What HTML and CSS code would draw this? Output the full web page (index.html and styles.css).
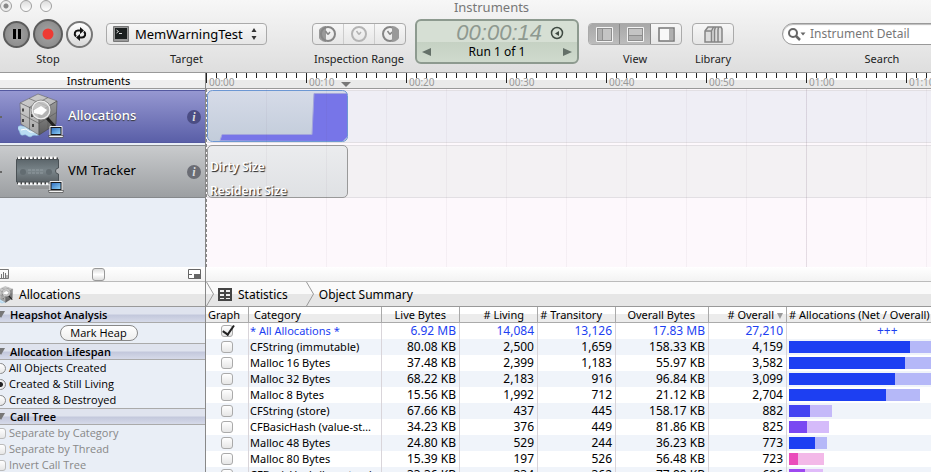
FILE: index.html
```html
<!DOCTYPE html>
<html lang="en">
<head>
<meta charset="utf-8">
<title>Instruments</title>
<link rel="stylesheet" href="styles.css">
</head>
<body>
<svg class="defs" aria-hidden="true">
  <defs>
    <linearGradient id="g-top" x1="0" y1="0" x2="1" y2="1"><stop offset="0" stop-color="#d2d2d2"/><stop offset="1" stop-color="#b4b4b4"/></linearGradient>
    <linearGradient id="g-left" x1="0" y1="0" x2="0" y2="1"><stop offset="0" stop-color="#d0d0d0"/><stop offset="1" stop-color="#a2a2a2"/></linearGradient>
    <linearGradient id="g-right" x1="0" y1="0" x2="0" y2="1"><stop offset="0" stop-color="#9a9a9a"/><stop offset="1" stop-color="#5c5c5c"/></linearGradient>
    <linearGradient id="g-chip" x1="0" y1="0" x2="0" y2="1"><stop offset="0" stop-color="#5c666b"/><stop offset=".5" stop-color="#7a858a"/><stop offset="1" stop-color="#5b6266"/></linearGradient>
    <linearGradient id="g-screen" x1="0" y1="0" x2="1" y2="1"><stop offset="0" stop-color="#2f6fc0"/><stop offset="1" stop-color="#8fd0f5"/></linearGradient>
    <symbol id="laptop" viewBox="0 0 16 12">
      <path d="M2 .5h12v9H2z" fill="#16181c" stroke="#eee"/>
      <path d="M3.500 2h9v6h-9z" fill="url(#g-screen)"/>
      <path d="M.5 9.500h15l-.5 2H1z" fill="#f2f2f2" stroke="#333" stroke-width=".6"/>
    </symbol>
    <symbol id="cube" viewBox="0 0 44 46">
      <path d="M0 34c3-3 5 1 8-2l8 2 6 7c-3 3-6 0-8 2s-4 0-6-1-5 2-6-2-3-3-2-6z" fill="#b9dcf2" stroke="#8abce0" stroke-width=".6"/>
      <path d="M3 37l5-1 4 3 5 0" fill="none" stroke="#fff"/>
      <path d="M2 10 20 1l19 7-18 11z" fill="url(#g-top)" stroke="#666" stroke-width=".6"/>
      <path d="M2 10l19 9v23L3 31z" fill="url(#g-left)" stroke="#666" stroke-width=".6"/>
      <path d="M21 19 39 8l-1 23-17 11z" fill="url(#g-right)" stroke="#444" stroke-width=".6"/>
      <path d="M11 5.500 30 13.500M2.500 20.500 21 30.500 38.500 19.500M11.500 14.500V36.500M30 13.500V36.500M11 14.500 30 4.500" fill="none" stroke="#555" stroke-width=".6"/>
      <path d="M5 15.500v3M14 21v3M5 26v3M15 31v3" stroke="#222" stroke-width="1.500"/>
      <path d="M29 25l9 10" stroke="#222" stroke-width="3"/>
      <circle cx="23" cy="17" r="9" fill="#c4c4c4" fill-opacity=".75" stroke="#ececec" stroke-width="1.500"/>
      <circle cx="23" cy="17" r="10" fill="none" stroke="#777" stroke-width=".7"/>
      <path d="M16 17l7-4 6 4-5 5-8-2z" fill="#fff"/>
    </symbol>
    <symbol id="clock" viewBox="0 0 18 18">
      <circle cx="9" cy="9" r="7" fill="none" stroke="currentColor" stroke-width="2"/>
      <path d="M9 9.500 6.500 6M9 9.500 11 7" stroke="currentColor" stroke-width="1.500" fill="none"/>
    </symbol>
  </defs>
</svg>

<div class="window">
  <header class="chrome">
    <div class="titlebar">
      <div class="lights">
        <button class="light edited" aria-label="Close"></button>
        <button class="light" aria-label="Minimize"></button>
        <button class="light" aria-label="Zoom"></button>
      </div>
      <h1 class="title">Instruments</h1>
    </div>
    <div class="toolbar">
      <div class="group transport">
        <div class="controls">
          <button class="round dark" aria-label="Pause"><svg width="10" height="10" viewBox="0 0 10 10"><path d="M1 0h3v10H1zM6 0h3v10H6z"/></svg></button>
          <button class="round dark big" aria-label="Stop"><svg width="12" height="12" viewBox="0 0 12 12"><circle cx="6" cy="6" r="5.500" fill="#ee3a33"/></svg></button>
          <button class="round" aria-label="Loop"><svg width="14" height="14" viewBox="0 0 14 14"><path d="M3 9.500C0.500 7 2 3.500 5 3.500h3M11 4.500c2.500 2.500 1 6-2 6H6" fill="none" stroke="#111" stroke-width="2"/><path d="M7 0v7L11 3.500zM7 7v7L3 10.500z" fill="#111"/></svg></button>
        </div>
        <span class="label">Stop</span>
      </div>
      <div class="group target">
        <div class="controls">
          <button class="box popup">
            <svg width="16" height="16" viewBox="0 0 16 16"><path d="M.5.5h15v15H.5z" fill="#999" stroke="#777"/><path d="M2 2h12v11H2z" fill="#1b1f1f"/><path d="M3.500 4l2 1.500-2 1.500M6 7.500h3" fill="none" stroke="#eee" stroke-width=".9"/></svg>
            <span class="popup-name">MemWarningTest</span>
            <svg width="6" height="12" viewBox="0 0 6 12"><path d="M3 0l2.500 4h-5zM3 12l2.500-4h-5z" fill="#333"/></svg>
          </button>
        </div>
        <span class="label">Target</span>
      </div>
      <div class="group range">
        <div class="controls">
          <div class="box segments clocks">
            <button aria-label="Set range start"><svg width="18" height="18" viewBox="0 0 18 18" color="#868686"><path d="M7 1a8 8 0 0 0 0 16z" fill="#999"/><use href="#clock"/></svg></button>
            <button aria-label="Clear range"><svg width="18" height="18" viewBox="0 0 18 18" color="#b4b4b4"><use href="#clock"/></svg></button>
            <button aria-label="Set range end"><svg width="18" height="18" viewBox="0 0 18 18" color="#868686"><use href="#clock"/><path d="M11 1a8 8 0 0 1 0 16z" fill="#999"/></svg></button>
          </div>
        </div>
        <span class="label">Inspection Range</span>
      </div>
      <div class="lcd">
        <div class="lcd-time"><span>00:00:14</span><svg width="14" height="14" viewBox="0 0 14 14"><circle cx="7" cy="7" r="5.500" fill="none" stroke="#3f4a42" stroke-width="1.500"/><path d="M5 7.500l4-2.500v5z" fill="#3f4a42"/></svg></div>
        <div class="lcd-run">
          <button aria-label="Previous run"><svg width="9" height="8" viewBox="0 0 9 8"><path d="M0 4l9-4v8z" fill="#647068"/></svg></button>
          <span>Run 1 of 1</span>
          <button aria-label="Next run"><svg width="9" height="8" viewBox="0 0 9 8"><path d="M9 4L0 0v8z" fill="#647068"/></svg></button>
        </div>
      </div>
      <div class="group view">
        <div class="controls">
          <div class="box segments views">
            <button class="on" aria-label="Left pane"><svg width="17" height="15" viewBox="0 0 17 15"><path d="M.5.5h16v14H.5z" fill="#8e8e8e" stroke="#f4f4f4"/><path d="M2 2h4v11H2z" fill="#b0b0b0"/><path d="M7 2h8v11H7z" fill="#c4c4c4"/></svg></button>
            <button class="on" aria-label="Bottom pane"><svg width="17" height="15" viewBox="0 0 17 15"><path d="M.5.5h16v14H.5z" fill="#8e8e8e" stroke="#f4f4f4"/><path d="M2 2h13v6H2z" fill="#c4c4c4"/><path d="M2 9h13v4H2z" fill="#b0b0b0"/></svg></button>
            <button aria-label="Right pane"><svg width="17" height="15" viewBox="0 0 17 15"><path d="M1 1h15v13H1z" fill="#f8f8f8" stroke="#777" stroke-width="1.500"/><path d="M11 2h4v11h-4z" fill="#b0b0b0"/></svg></button>
          </div>
        </div>
        <span class="label">View</span>
      </div>
      <div class="group library">
        <div class="controls">
          <button class="box" aria-label="Library"><svg width="19" height="17" viewBox="0 0 19 17"><path d="M1 5l3-4h13l1 2v13H1z" fill="#ddd" stroke="#858585" stroke-width="1.500"/><path d="M1 5h6.500v11M7.500 5l2-4M10.500 16V4l1-3M14 16V4l.5-3" fill="none" stroke="#858585" stroke-width="1.500"/></svg></button>
        </div>
        <span class="label">Library</span>
      </div>
      <div class="group search">
        <div class="controls">
          <div class="field">
            <svg width="18" height="13" viewBox="0 0 18 13"><circle cx="5" cy="5" r="4" fill="none" stroke="#666" stroke-width="2"/><path d="M8 8l4 4" stroke="#666" stroke-width="2.500"/><path d="M12.500 4.500h5l-2.500 3z" fill="#666"/></svg>
            <input id="search" type="text" placeholder="Instrument Detail">
          </div>
        </div>
        <label class="label" for="search">Search</label>
      </div>
    </div>
  </header>

  <section class="tracks">
    <aside class="instruments">
      <h2 class="column-title">Instruments</h2>
      <div class="instrument selected">
        <span class="tick"></span>
        <svg class="art" width="48" height="46" viewBox="0 0 48 46"><use href="#cube" x="2" width="44" height="46"/><use href="#laptop" x="32" y="33" width="16" height="12"/></svg>
        <span class="name">Allocations</span>
        <button class="info" aria-label="Allocations info">i</button>
      </div>
      <div class="instrument">
        <span class="tick"></span>
        <svg class="art" width="48" height="46" viewBox="0 0 48 46">
          <path d="M2 38h34l-2 3H6z" fill="#777" opacity=".4"/>
          <path d="M1 10.500H42M1 35H42" stroke="#444" stroke-width="2"/>
          <path d="M2 10H42M2 35.500H42" stroke="#f8f8f8" stroke-width="3" stroke-dasharray="2.500 1.500"/>
          <path d="M.5 11.500h42V20a3 3 0 0 0 0 6v8H.5z" fill="url(#g-chip)" stroke="#4a5155"/>
          <circle cx="7" cy="24" r="3" fill="#626c71"/><circle cx="33" cy="24" r="3" fill="#626c71"/>
          <path d="M12 22h16M12 25h16" stroke="#929ca1" stroke-dasharray="3 1"/>
          <use href="#laptop" x="32" y="33" width="16" height="12"/>
        </svg>
        <span class="name">VM Tracker</span>
        <button class="info" aria-label="VM Tracker info">i</button>
      </div>
      <div class="rest"></div>
      <div class="strip">
        <svg width="9" height="10" viewBox="0 0 9 10"><path d="M0 .5h8.500v9H0M1.500 9V5M3.500 9V3M5.500 9V4M7 9V6" fill="none" stroke="#777"/></svg>
        <span class="thumb"></span>
        <svg width="13" height="10" viewBox="0 0 13 10"><path d="M.5.5h12v9H.5z" fill="#fff" stroke="#666"/><path d="M6 5h7v5H6zM0 5h4v1H0z" fill="#666"/></svg>
      </div>
    </aside>
    <div class="timeline">
      <div class="ruler">
        <span>00:00</span><span>00:10</span><span>00:20</span><span>00:30</span><span>00:40</span><span>00:50</span><span>01:00</span><span>01:10</span>
        <i class="playhead"></i>
      </div>
      <div class="lanes">
        <div class="lane blue">
          <svg class="run" viewBox="0 0 141 53" width="141" height="53">
            <defs><linearGradient id="g-run" x1="0" y1="0" x2="0" y2="1"><stop offset="0" stop-color="#d6dbe8"/><stop offset="1" stop-color="#c2ccda"/></linearGradient></defs>
            <rect x=".5" y=".5" width="140" height="51" rx="5" fill="url(#g-run)"/>
            <path d="M13 50.500l2-5.500h90l2-41h33v43l-4 4z" fill="#7775e8"/>
            <path d="M13 50.500l2-6h90l2-41h33" fill="none" stroke="#a3a5dc"/>
            <rect x=".5" y=".5" width="140" height="51" rx="5" fill="none" stroke="#6d97d3"/>
          </svg>
        </div>
        <div class="lane">
          <div class="run plain"><span>Dirty Size</span><span>Resident Size</span></div>
        </div>
      </div>
      <div class="strip"></div>
    </div>
  </section>

  <section class="detail">
    <aside class="options">
      <div class="crumb-home"><svg width="18" height="18" viewBox="0 0 44 46"><use href="#cube"/></svg><span>Allocations</span></div>
      <h3>Heapshot Analysis</h3>
      <div class="heap"><button>Mark Heap</button></div>
      <h3>Allocation Lifespan</h3>
      <div class="choices">
        <label><input type="radio" name="life">All Objects Created</label>
        <label><input type="radio" name="life" checked>Created &amp; Still Living</label>
        <label><input type="radio" name="life">Created &amp; Destroyed</label>
      </div>
      <h3>Call Tree</h3>
      <div class="choices off">
        <label><input type="checkbox" disabled>Separate by Category</label>
        <label><input type="checkbox" disabled>Separate by Thread</label>
        <label><input type="checkbox" disabled>Invert Call Tree</label>
      </div>
    </aside>
    <div class="results">
      <nav class="crumbs">
        <svg class="chevron" width="9" height="24" viewBox="0 0 9 24"><path d="M.5 0l7 12-7 12" fill="none" stroke="#999"/></svg>
        <svg width="14" height="13" viewBox="0 0 14 13"><path d="M0 0h14v13H0z" fill="#444"/><path d="M2 2h4v2H2zM8 2h4v2H8zM2 6h4v2H2zM8 6h4v2H8zM2 10h4v1H2zM8 10h4v1H8z" fill="#eee"/></svg>
        <a href="#stats">Statistics</a>
        <svg class="chevron" width="9" height="24" viewBox="0 0 9 24"><path d="M.5 0l7 12-7 12" fill="none" stroke="#999"/></svg>
        <a href="#summary">Object Summary</a>
      </nav>
      <table>
        <colgroup><col class="c-graph"><col class="c-cat"><col class="c-num"><col class="c-num"><col class="c-num"><col class="c-bytes"><col class="c-num"><col></colgroup>
        <thead><tr><th class="graph">Graph</th><th class="cat">Category</th><th>Live Bytes</th><th># Living</th><th># Transitory</th><th>Overall Bytes</th><th class="sorted"># Overall<i></i></th><th class="bar-head"># Allocations (Net / Overall)</th></tr></thead>
        <tbody>
          <tr class="all"><td><input type="checkbox" checked aria-label="Graph all"></td><td>* All Allocations *</td><td>6.92 MB</td><td>14,084</td><td>13,126</td><td>17.83 MB</td><td>27,210</td><td class="plus">+++</td></tr>
          <tr><td><input type="checkbox" aria-label="Graph"></td><td>CFString (immutable)</td><td>80.08 KB</td><td>2,500</td><td>1,659</td><td>158.33 KB</td><td>4,159</td><td><div class="bar" style="--net:121px;--all:202px"></div></td></tr>
          <tr><td><input type="checkbox" aria-label="Graph"></td><td>Malloc 16 Bytes</td><td>37.48 KB</td><td>2,399</td><td>1,183</td><td>55.97 KB</td><td>3,582</td><td><div class="bar" style="--net:116px;--all:174px"></div></td></tr>
          <tr><td><input type="checkbox" aria-label="Graph"></td><td>Malloc 32 Bytes</td><td>68.22 KB</td><td>2,183</td><td>916</td><td>96.84 KB</td><td>3,099</td><td><div class="bar" style="--net:106px;--all:151px"></div></td></tr>
          <tr><td><input type="checkbox" aria-label="Graph"></td><td>Malloc 8 Bytes</td><td>15.56 KB</td><td>1,992</td><td>712</td><td>21.12 KB</td><td>2,704</td><td><div class="bar" style="--net:97px;--all:131px"></div></td></tr>
          <tr><td><input type="checkbox" aria-label="Graph"></td><td>CFString (store)</td><td>67.66 KB</td><td>437</td><td>445</td><td>158.17 KB</td><td>882</td><td><div class="bar indigo" style="--net:21px;--all:43px"></div></td></tr>
          <tr><td><input type="checkbox" aria-label="Graph"></td><td>CFBasicHash (value-store)</td><td>34.23 KB</td><td>376</td><td>449</td><td>81.86 KB</td><td>825</td><td><div class="bar violet" style="--net:18px;--all:40px"></div></td></tr>
          <tr><td><input type="checkbox" aria-label="Graph"></td><td>Malloc 48 Bytes</td><td>24.80 KB</td><td>529</td><td>244</td><td>36.23 KB</td><td>773</td><td><div class="bar" style="--net:26px;--all:38px"></div></td></tr>
          <tr><td><input type="checkbox" aria-label="Graph"></td><td>Malloc 80 Bytes</td><td>15.39 KB</td><td>197</td><td>526</td><td>56.48 KB</td><td>723</td><td><div class="bar pink" style="--net:9px;--all:35px"></div></td></tr>
          <tr><td><input type="checkbox" aria-label="Graph"></td><td>CFBasicHash (key-store)</td><td>33.36 KB</td><td>334</td><td>362</td><td>77.88 KB</td><td>696</td><td><div class="bar purple" style="--net:16px;--all:34px"></div></td></tr>
        </tbody>
      </table>
    </div>
  </section>
</div>
</body>
</html>
```
FILE: styles.css
```css
* { box-sizing: border-box; }
body { margin: 0; font-family: "Noto Sans", sans-serif; font-size: 12px; line-height: 16px; color: #000; background: #e9eef6; }
button { border: 0; padding: 0; background: none; font: inherit; color: inherit; }
h1, h2, h3 { margin: 0; font-size: 12px; }
svg { display: block; flex: none; }
.defs { position: absolute; width: 0; height: 0; }
.window { height: 100vh; overflow: hidden; display: flex; flex-direction: column; }

/* Title bar and toolbar */
.chrome { flex: none; background: linear-gradient(#f7f7f7, #dedede); border-bottom: 1px solid #999; overflow: hidden; }
.titlebar { display: flex; height: 16px; }
.lights { display: flex; gap: 8px; width: 52px; }
.light { width: 12px; height: 12px; border: 1px solid #a0a0a0; border-radius: 50%; background: linear-gradient(#ddd, #fff); flex: none; }
.light.edited { background: radial-gradient(circle, #888 0 2px, #eee 3px); }
.title { flex: 1; text-align: center; font-size: 13px; line-height: 14px; font-weight: 400; color: #777; }
.toolbar { display: flex; height: 56px; }
.group { display: flex; flex-direction: column; align-items: center; flex: none; }
.controls { display: flex; align-items: center; height: 36px; }
.label { font-size: 11px; line-height: 14px; color: #222; white-space: nowrap; }
.transport { margin-left: 3px; }
.transport .controls { gap: 3px; }
.round { width: 27px; height: 27px; border-radius: 50%; border: 2px solid #777; background: linear-gradient(#fff, #d8d8d8); display: grid; place-items: center; }
.round.dark { background: radial-gradient(#a5a5a5, #858585); border-color: #5c5c5c; }
.round.big { width: 30px; height: 30px; }
.target { margin-left: 13px; }
.box { height: 22px; border: 1px solid #aaa; border-radius: 4px; background: linear-gradient(#f7f7f7, #e6e6e6); }
.popup { width: 161px; display: flex; align-items: center; padding: 0 9px 0 6px; gap: 6px; font-size: 13px; }
.popup-name { flex: 1; text-align: left; }
.range { margin-left: 45px; }
.segments { display: flex; width: 94px; overflow: hidden; }
.segments button { flex: 1; display: grid; place-items: center; }
.clocks button + button { border-left: 1px solid #ccc; }
.views .on { background: linear-gradient(#a8a8a8, #bcbcbc); border-right: 1px solid #888; }
.lcd { flex: none; width: 164px; height: 45px; margin: 3px 0 0 9px; border: 2px solid #8d9a8f; border-radius: 6px; background: linear-gradient(#d6dfd4 0 50%, #c5d1c3 50%, #cfdacd); }
.lcd-time { display: flex; justify-content: flex-end; align-items: center; gap: 8px; height: 23px; padding-right: 13px; font: italic 22px/24px "Liberation Sans", sans-serif; color: #8e9990; }
.lcd-run { display: flex; justify-content: space-between; align-items: center; height: 16px; padding: 0 5px; }
.view { margin-left: 9px; }
.library { margin-left: 10px; }
.library .box { width: 42px; display: grid; place-items: center; }
.search { margin-left: 48px; }
.field { width: 200px; height: 22px; display: flex; align-items: center; gap: 4px; padding: 0 5px; border: 1px solid #999; border-radius: 11px; background: #fff; box-shadow: inset 0 1px 1px #bbb; }
.field input { flex: 1; min-width: 0; border: 0; padding: 0; background: none; font: inherit; outline: 0; }
.field input::placeholder { color: #777; opacity: 1; }

/* Instrument list and timeline */
.tracks { flex: none; display: flex; height: 209px; }
.instruments { flex: none; width: 206px; border-right: 1px solid #888; display: flex; flex-direction: column; }
.column-title { height: 16px; padding-right: 8px; text-align: center; font-size: 11px; font-weight: 400; line-height: 15px; background: linear-gradient(#fff 50%, #eee 50%); border-bottom: 1px solid #999; }
.instrument { display: flex; align-items: center; height: 53px; margin-top: 2px; background: linear-gradient(#c9cbcd, #9c9fa2); border: solid #85888b; border-width: 1px 0; font-size: 12px; }
.column-title + .instrument { margin-top: 1px; }
.instrument.selected { background: linear-gradient(#9698d1, #5a5fa8); border-color: #5459a0; color: #fff; font-weight: 500; text-shadow: 0 1px 1px #333; }
.art { margin-top: -2px; }
.tick { width: 2px; height: 2px; background: #666; margin-right: 14px; }
.name { flex: 1; margin-left: 4px; padding-bottom: 3px; }
.info { width: 14px; height: 14px; margin-right: 4px; border-radius: 50%; background: #6b6d75; color: #ddd; font: italic bold 12px/14px "Liberation Serif", serif; text-shadow: none; }
.selected .info { background: #4b4d84; }
.instrument .name { font-size: 13px; }
.rest { flex: 1; background: #e9eef6; }
.strip { flex: none; display: flex; align-items: center; justify-content: space-between; height: 15px; background: linear-gradient(#fff, #f3f3f3); border-bottom: 1px solid #bbb; }
.instruments .strip { padding-right: 4px; }
.thumb { width: 13px; height: 13px; border: 1px solid #999; border-radius: 3px; background: linear-gradient(#ddd, #fff 50%, #ddd); }
.timeline { flex: 1; min-width: 0; display: flex; flex-direction: column; }
.ruler { position: relative; display: flex; height: 16px; overflow: hidden; border-bottom: 1px solid #999; background:
  repeating-linear-gradient(90deg, #222 0 1px, transparent 1px 100px) 0 0 / 100% 10px no-repeat,
  repeating-linear-gradient(90deg, #222 0 1px, transparent 1px 10px) 0 0 / 100% 5px no-repeat,
  linear-gradient(#fff 50%, #eaeaea 50%); }
.ruler span { flex: none; width: 100px; padding-left: 3px; font-size: 10px; line-height: 18px; color: #999; }
.playhead { position: absolute; left: 135px; top: 9px; border: 5px solid transparent; border-top-color: #777; border-bottom: 0; }
.lanes { flex: 1; padding-top: 1px; display: flex; flex-direction: column; gap: 2px; border-left: 1px dashed #888; background: #fdf8fc; position: relative; }
.lanes::after { content: ""; position: absolute; inset: 0; pointer-events: none; background:
  linear-gradient(rgba(90, 60, 90, .1), rgba(90, 60, 90, .1)) 599px 0 / 1px 100% no-repeat,
  repeating-linear-gradient(90deg, transparent 0 59px, rgba(90, 60, 90, .05) 59px 60px); }
.lane { height: 53px; background: #f3f1f3; border: solid #e2dfe3; border-width: 1px 0; }
.lane.blue { background: #efeef5; }
.run { margin-top: -1px; }
.plain { display: flex; flex-direction: column; width: 141px; height: 53px; padding: 9px 2px 0; overflow: hidden; border: 1px solid #999; border-radius: 5px; background: linear-gradient(#ebecee, #dfe1e4); font-size: 12px; font-weight: 600; line-height: 24px; color: #fff; text-shadow: 1px 1px 1px #222; }

/* Detail options */
.detail { flex: 1; min-height: 0; display: flex; overflow: hidden; }
.options { flex: none; width: 206px; border-right: 1px solid #888; background: #e9eef6; font-family: "Open Sans", sans-serif; font-size: 11px; }
.crumb-home { display: flex; align-items: center; height: 25px; padding-top: 2px; gap: 4px; margin-left: -3px; font: 12px/16px "Noto Sans", sans-serif; background: linear-gradient(#fafafa 50%, #e6e6e6 50%); border-bottom: 1px solid #999; }
h3 { height: 16px; display: flex; align-items: center; gap: 5px; font-size: 11px; font-weight: 600; line-height: 15px; border-bottom: 1px solid #aaa; background: linear-gradient(#dfe3ee 45%, #c3c8dc 55%, #d6dae9); }
h3::before { content: ""; border: 4px solid transparent; border-top: 7px solid #777; border-bottom: 0; margin-left: -3px; }
.heap { display: grid; place-items: center; height: 21px; padding-right: 8px; border-bottom: 1px solid #aaa; }
.heap button { width: 78px; height: 16px; border: 1px solid #888; border-radius: 8px; line-height: 14px; background: linear-gradient(#fff, #eee); }
.choices { border-bottom: 1px solid #aaa; }
.choices label { display: flex; align-items: center; gap: 3px; height: 16px; margin-left: -5px; }
.choices.off { color: #888; border: 0; }
input[type="radio"], input[type="checkbox"] { appearance: none; flex: none; width: 11px; height: 11px; margin: 0; border: 1px solid #888; border-radius: 50%; background: linear-gradient(#fff, #e6e6e6); }
input[type="radio"]:checked { background: radial-gradient(circle, #222 0 2px, #eee 3px); }
input[type="checkbox"] { border-radius: 3px; }
.off input[type="checkbox"] { border-color: #bbb; }

/* Results table */
.results { flex: 1; min-width: 0; background: #fff; overflow: hidden; }
.crumbs { display: flex; align-items: center; height: 25px; background: linear-gradient(#fafafa 50%, #e6e6e6 50%); border-bottom: 1px solid #999; }
.crumbs a { color: #000; text-decoration: none; margin: 0 18px 0 6px; padding-top: 2px; white-space: nowrap; }
.crumbs .chevron + svg { margin-left: 3px; }
.crumbs .chevron + a { margin-left: 4px; }
table { width: 100%; table-layout: fixed; border-collapse: separate; border-spacing: 0; }
.c-graph { width: 43px; }
.c-cat { width: 133px; }
.c-num { width: 78px; }
.c-bytes { width: 93px; }
th, td { height: 16px; padding: 0 3px 0 1px; line-height: 16px; text-align: right; white-space: nowrap; overflow: hidden; border-right: 1px solid #d9d5da; }
td:last-child, th:last-child { border-right: 0; }
th { font-size: 11px; font-weight: 400; padding-right: 13px; line-height: 15px; border-right-color: #aaa; border-bottom: 1px solid #aaa; background: linear-gradient(#fff 50%, #ececec 50%); }
td:first-child { text-align: center; padding: 0; }
td:first-child input { display: block; margin: 0 auto; width: 12px; height: 12px; border-color: #aaa; }
td:nth-child(2) { padding-right: 8px; font-size: 11px; text-align: left; text-overflow: ellipsis; }
th.graph { padding: 0 6px 0 0; text-align: center; }
th.cat { text-align: left; padding-left: 5px; }
th.bar-head { text-align: left; padding: 0 2px; }
th.sorted { padding-right: 3px; }
.sorted i { display: inline-block; margin-left: 3px; border: 3px solid transparent; border-top: 6px solid #999; border-bottom: 0; }
tbody tr:nth-child(even) { background: #f0f4fa; }
.all { color: #1d3ff2; }
.all input[type="checkbox"] { position: relative; overflow: visible; }
.all input::after { content: ""; position: absolute; left: 3px; top: -3px; width: 5px; height: 10px; border: solid #222; border-width: 0 2px 2px 0; transform: rotate(35deg); }
td:last-child { padding: 0 0 0 2px; text-align: left; }
td.plus:last-child { padding-left: 90px; }
.bar { --c: #1d3ff2; --l: #b5b8f8; width: var(--all); height: 12px; background: linear-gradient(90deg, var(--c) var(--net), var(--l) var(--net)); }
.indigo { --c: #4444f2; --l: #c4b9f9; }
.violet { --c: #7a48f2; --l: #d5bbfa; }
.pink { --c: #ea4cbb; --l: #f3b9e8; }
.purple { --c: #9e48f0; --l: #e0bbf9; }
```
